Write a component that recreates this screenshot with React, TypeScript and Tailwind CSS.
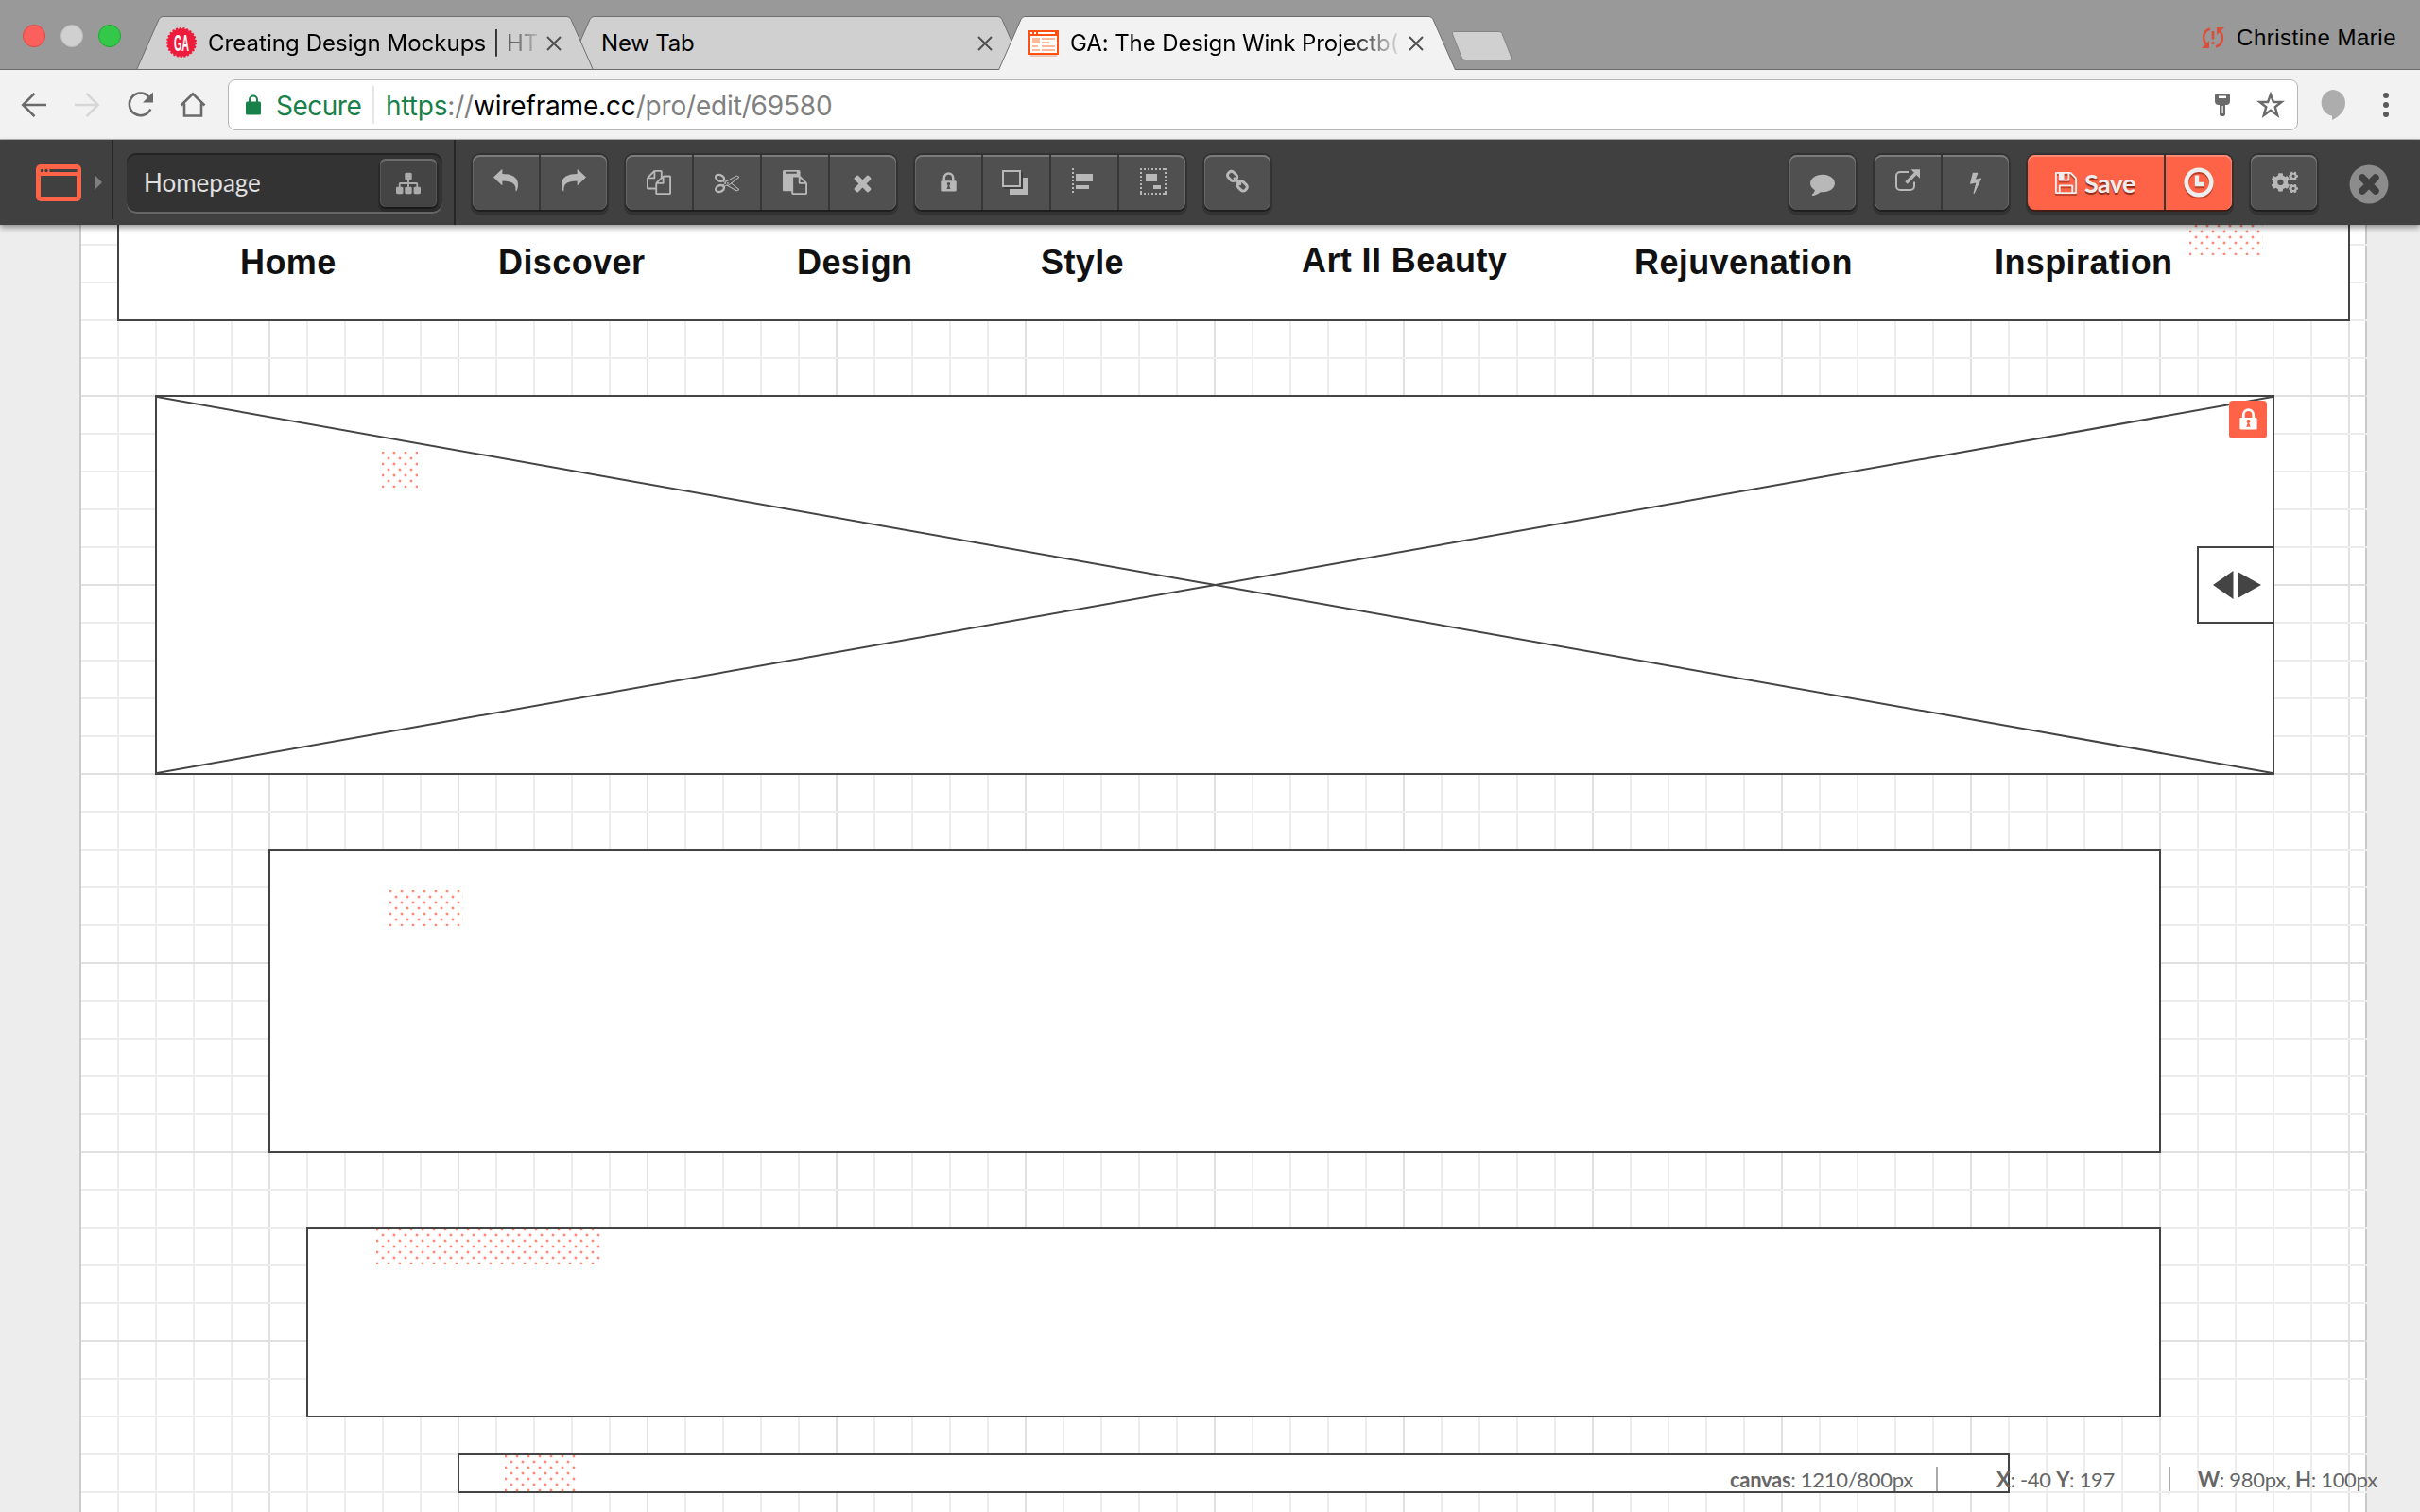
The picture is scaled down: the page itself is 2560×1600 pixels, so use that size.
import type { ReactNode } from 'react';
import { FaCogs } from 'react-icons/fa';

/* ---------- icon helpers ---------- */

const Glyph = ({ d, className = 'size-[26px]' }: { d: string; className?: string }) => (
  <svg viewBox="0 0 1792 1792" className={className} fill="currentColor">
    <path d={d} />
  </svg>
);

const SITEMAP =
  'M1792 1248v320q0 40-28 68t-68 28h-320q-40 0-68-28t-28-68v-320q0-40 28-68t68-28h96v-192h-512v192h96q40 0 68 28t28 68v320q0 40-28 68t-68 28h-320q-40 0-68-28t-28-68v-320q0-40 28-68t68-28h96v-192h-512v192h96q40 0 68 28t28 68v320q0 40-28 68t-68 28h-320q-40 0-68-28t-28-68v-320q0-40 28-68t68-28h96v-192q0-52 38-90t90-38h512v-192h-96q-40 0-68-28t-28-68v-320q0-40 28-68t68-28h320q40 0 68 28t28 68v320q0 40-28 68t-68 28h-96v192h512q52 0 90 38t38 90v192h96q40 0 68 28t28 68z';
const COPY =
  'M1696 384q40 0 68 28t28 68v1216q0 40-28 68t-68 28h-960q-40 0-68-28t-28-68v-288h-544q-40 0-68-28t-28-68v-672q0-40 20-88t48-76l408-408q28-28 76-48t88-20h416q40 0 68 28t28 68v328q68-40 128-40h416zm-544 213l-299 299h299v-299zm-640-384l-299 299h299v-299zm196 647l316-316v-416h-384v416q0 40-28 68t-68 28h-416v640h512v-256q0-40 20-88t48-76zm956 804v-1152h-384v416q0 40-28 68t-68 28h-416v640h896z';
const CUT =
  'M960 896q26 0 45 19t19 45-19 45-45 19-45-19-19-45 19-45 45-19zm300 64l507 398q28 20 25 56-5 35-35 51l-128 64q-13 7-29 7-17 0-31-8l-690-387-110 66q-8 4-12 5 14 49 10 97-7 77-56 147.5t-132 123.5q-132 84-277 84-136 0-222-78-90-84-79-207 7-76 56-147t131-124q132-84 278-84 83 0 151 31 9-13 22-22l122-73-122-73q-13-9-22-22-68 31-151 31-146 0-278-84-82-53-131-124t-56-147q-5-59 15.5-113t63.5-93q85-79 222-79 145 0 277 84 83 52 132 123t56 148q4 48-10 97 4 1 12 5l110 66 690-387q14-8 31-8 16 0 29 7l128 64q30 16 35 51 3 36-25 56zm-681-260q46-42 21-108t-106-117q-92-59-192-59-74 0-113 36-46 42-21 108t106 117q92 59 192 59 74 0 113-36zm-85 745q81-51 106-117t-21-108q-39-36-113-36-100 0-192 59-81 51-106 117t21 108q39 36 113 36 100 0 192-59zm178-613l96 58v-11q0-36 33-56l14-8-79-44-26 26q-3 3-10 11t-12 12q-2 2-4 3.5t-3 2.5zm224 224l96 32 736-576-128-64-768 431v113l-160 96 9 8q2 2 7 6 4 4 11 12t11 12l26 26zm704 416l128-64-520-408-177 138q-2 3-13 7z';
const PASTE =
  'M768 1664h896v-640h-416q-40 0-68-28t-28-68v-416h-384v1152zm256-1440v-64q0-13-9.5-22.5t-22.5-9.5h-704q-13 0-22.5 9.5t-9.5 22.5v64q0 13 9.5 22.5t22.5 9.5h704q13 0 22.5-9.5t9.5-22.5zm256 672h299l-299-299v299zm512 128v672q0 40-28 68t-68 28h-960q-40 0-68-28t-28-68v-160h-544q-40 0-68-28t-28-68v-1344q0-40 28-68t68-28h1088q40 0 68 28t28 68v328q21 13 36 28l408 408q28 28 48 76t20 88z';
const TIMES =
  'M1490 1322q0 40-28 68l-136 136q-28 28-68 28t-68-28l-294-294-294 294q-28 28-68 28t-68-28l-136-136q-28-28-28-68t28-68l294-294-294-294q-28-28-28-68t28-68l136-136q28-28 68-28t68 28l294 294 294-294q28-28 68-28t68 28l136 136q28 28 28 68t-28 68l-294 294 294 294q28 28 28 68z';
const COMMENT =
  'M1792 896q0 174-120 321.5t-326 233-450 85.5q-70 0-145-8-198 175-460 242-49 14-114 22-17 2-30.5-9t-17.5-29v-1q-3-4-.5-12t2-10 4.5-9.5l6-9 7-8.5 8-9q7-8 31-34.5t34.5-38 31-39.5 32.5-51 27-59 26-76q-157-89-247.5-220t-90.5-281q0-130 71-248.5t191-204.5 286-136.5 348-50.5q244 0 450 85.5t326 233 120 321.5z';
const BOLT =
  'M1333 566q18 20 7 44l-540 1157q-13 25-42 25-4 0-14-2-17-5-25.5-19t-4.5-30l197-808-406 101q-4 1-12 1-18 0-31-11-18-15-13-39l201-825q4-14 16-23t28-9h328q19 0 32 12.5t13 29.5q0 8-5 18l-171 463 396-98q8-2 12-2 19 0 34 15z';
const FLOPPY =
  'M512 1536h768v-384h-768v384zm896 0h128v-896q0-14-10-38.5t-20-34.5l-281-281q-10-10-34-20t-39-10v416q0 40-28 68t-68 28h-576q-40 0-68-28t-28-68v-416h-128v1280h128v-416q0-40 28-68t68-28h832q40 0 68 28t28 68v416zm-384-928v-320q0-13-9.5-22.5t-22.5-9.5h-192q-13 0-22.5 9.5t-9.5 22.5v320q0 13 9.5 22.5t22.5 9.5h192q13 0 22.5-9.5t9.5-22.5zm640 32v928q0 40-28 68t-68 28h-1344q-40 0-68-28t-28-68v-1344q0-40 28-68t68-28h928q40 0 88 20t76 48l280 280q28 28 48 76t20 88z';

const UndoIcon = ({ flip = false }: { flip?: boolean }) => (
  <svg viewBox="0 0 26 24" className={flip ? 'mb-1 h-6 w-[26px] -scale-x-100' : 'mb-1 h-6 w-[26px]'} fill="currentColor">
    <path d="M0 8.6 8.8 0.3Q9.4 0 9.4 0.8V5C19 5 26 8 26 16.5c0 2.6-.6 5-1.6 6.6-.4.6-1 .4-.9-.4C24.200 16 20 12.600 9.400 12.600V16.400Q9.400 17.400 8.600 16.700Z" />
  </svg>
);

const PadlockIcon = ({ className, hole }: { className: string; hole: string }) => (
  <svg viewBox="0 0 18 22" className={className} fill="none">
    <path d="M4 10V6.500a5 5 0 0 1 10 0V10" stroke="currentColor" strokeWidth="2.600" />
    <rect x="0.300" y="9.600" width="17.400" height="12" rx="1.200" fill="currentColor" />
    <path d="M9 11.400a1.900 1.900 0 0 1 1.100 3.400l-.3.600 1.300 3.600H6.900l1.300-3.600-.3-.6A1.900 1.900 0 0 1 9 11.400z" className={hole} />
  </svg>
);

const ArrangeIcon = () => (
  <svg viewBox="0 0 28 26" className="mr-0.5 h-[26px] w-7" shapeRendering="crispEdges">
    <path d="M22 8h6v18H8v-6h14z" fill="currentColor" />
    <path d="M20 18V2h2v18H2v-2z" fill="#3d3d3d" />
    <rect x="1" y="1" width="18" height="16" fill="none" stroke="currentColor" strokeWidth="2" />
  </svg>
);

const AlignIcon = () => (
  <svg viewBox="0 0 22 28" className="mr-1 mb-0.5 h-7 w-[22px]" shapeRendering="crispEdges" fill="currentColor">
    <path d="M1 0V28" stroke="currentColor" strokeWidth="2" strokeDasharray="2 2" />
    <path d="M4 6h18v8H4zM4 18h14v4H4z" />
  </svg>
);

const GroupIcon = () => (
  <svg viewBox="0 0 28 28" className="mb-0.5 ml-0.5 size-7" shapeRendering="crispEdges" fill="currentColor">
    <path d="M0 1H28M0 27H28M1 0V28M27 0V28" stroke="currentColor" strokeWidth="2" strokeDasharray="2 2" />
    <path d="M0 26h2v2H0zM26 26h2v2h-2zM6 6h12v8H6zM14 18h8v4h-8z" />
  </svg>
);

const ChainIcon = () => (
  <svg viewBox="0 0 26 26" className="mb-0.5 size-[26px]" fill="none" stroke="currentColor" strokeWidth="3" strokeLinecap="round">
    <rect x="-5.200" y="-3.900" width="10.400" height="7.800" rx="3.200" transform="translate(7.600 7.400) rotate(45)" />
    <rect x="-5.200" y="-3.900" width="10.400" height="7.800" rx="3.200" transform="translate(18.200 18) rotate(45)" />
    <path d="M10 9.800l5.800 5.800" />
  </svg>
);

const ShareIcon = () => (
  <svg viewBox="0 0 26 24" className="mb-1 h-6 w-[26px]" fill="none" stroke="currentColor">
    <path d="M14 3H5a4 4 0 0 0-4 4v11a4 4 0 0 0 4 4h11a4 4 0 0 0 4-4v-4.500" strokeWidth="2" />
    <path d="M11.500 14.500 22 4" strokeWidth="3.600" />
    <path d="M16.500 0.300H26V9.800Z" fill="currentColor" stroke="none" />
  </svg>
);

const HistoryIcon = () => (
  <svg viewBox="0 0 32 32" className="size-8 drop-shadow-[0_2px_0_rgba(120,30,10,0.5)]" fill="none" stroke="currentColor">
    <circle cx="16" cy="16" r="13.300" strokeWidth="4.600" />
    <path d="M14 8.500V18H22" strokeWidth="4.400" />
  </svg>
);

/* ---------- browser chrome ---------- */

const Tab = ({
  active = false,
  className,
  children,
}: {
  active?: boolean;
  className: string;
  children: ReactNode;
}) => (
  <div className={`relative h-[57px] w-[484px] shrink-0 ${className}`}>
    <svg viewBox="0 0 484 57" className="absolute inset-0 h-[57px] w-[484px]">
      <path
        d="M0.500 57 24 3.500Q25.500 0.500 28 0.500H456Q458.500 0.500 460 3.500L483.500 57"
        fill={active ? '#f2f2f2' : '#d0d0d0'}
        stroke="#6e6e6e"
        strokeWidth="1"
      />
      {!active && <path d="M0 56.500H484" stroke="#6a6a6a" />}
    </svg>
    <div className="relative flex h-full items-center pr-[34px] pl-8 text-[24px] text-black">{children}</div>
  </div>
);

const TabClose = () => (
  <svg viewBox="0 0 16 16" className="ml-auto size-4 shrink-0" stroke="#505050" strokeWidth="2">
    <path d="M1 1 15 15M15 1 1 15" />
  </svg>
);

const GaBadge = () => (
  <svg viewBox="0 0 32 32" className="mb-0.5 size-8 shrink-0 overflow-visible">
    <circle cx="16" cy="16" r="14.800" fill="#ee1c3c" />
    <circle cx="16" cy="16" r="15" fill="none" stroke="#ee1c3c" strokeWidth="2" strokeDasharray="2.200 1.570" />
    <text x="16" y="24.500" textAnchor="middle" textLength="16" lengthAdjust="spacingAndGlyphs" fontSize="24" fontWeight="700" fill="#fff" fontFamily="Liberation Sans, sans-serif">
      GA
    </text>
  </svg>
);

const WireframeFavicon = () => (
  <svg viewBox="0 0 32 28" className="h-7 w-8 shrink-0">
    <path d="M2 26h28v2H2z" fill="#eec7b9" />
    <path d="M0 0h32v26H0z" fill="#ff4f12" />
    <path d="M2 6h28v18H2z" fill="#fff" />
    <path d="M2 2h2v2H2zM6 2h2v2H6zM10 2h18v2H10z" fill="#fff" />
    <path d="M4 8h8v6H4zM14 8h14v2H14zM14 12h8v2h-8zM4 16h6v2H4zM14 16h14v2H14zM4 20h8v2H4zM14 20h14v2H14z" fill="#ffb899" />
  </svg>
);

const TabStrip = () => (
  <div className="flex h-[74px] items-end bg-[#999] shadow-[inset_0_-1px_0_#6a6a6a]">
    <div className="flex w-36 shrink-0 gap-4 self-start pt-[26px] pl-6">
      <span className="size-6 rounded-full border border-[#e2463f] bg-[#fc605c]" />
      <span className="size-6 rounded-full border border-[#bdbdbd] bg-[#d0d0d0]" />
      <span className="size-6 rounded-full border border-[#1aab29] bg-[#34c84a]" />
    </div>
    <Tab className="z-10">
      <GaBadge />
      <span className="ml-3 whitespace-nowrap tracking-[0.05px] [mask-image:linear-gradient(90deg,#000_84%,transparent_102%)]">
        Creating Design Mockups | HT
      </span>
      <TabClose />
    </Tab>
    <Tab className="-ml-7">
      <span className="ml-1 tracking-[-0.2px]">New Tab</span>
      <TabClose />
    </Tab>
    <Tab active className="z-10 -ml-7">
      <WireframeFavicon />
      <span className="ml-3 whitespace-nowrap tracking-[-0.1px] [mask-image:linear-gradient(90deg,#000_84%,transparent_102%)]">
        GA: The Design Wink Projectb(
      </span>
      <TabClose />
    </Tab>
    <svg viewBox="0 0 66 34" className="-ml-[5px] mb-2 h-[34px] w-[66px]">
      <path d="M3 1.500H51Q53 1.500 54 3.500L63.500 28Q64.500 31.500 62 31.500H15Q12.500 31.500 11.500 29.500L1.500 4Q0.500 1.500 3 1.500z" fill="#d0d0d0" stroke="#858585" />
    </svg>
    <div className="ml-auto flex items-center gap-[13px] self-start pt-[25px] pr-[25px]">
      <svg viewBox="0 0 24 22" className="h-[22px] w-6" fill="none" stroke="#d8503a" strokeWidth="2.600">
        <path d="M9 1.500C1 4 .5 13 5 18" />
        <path d="M15 20.500C23 18 23.500 9 19 4" />
        <path d="M0 22H8V14z M24 0H16V8z" fill="#d8503a" stroke="none" />
        <path d="M12 4v8.500M12 15v3" />
      </svg>
      <span className="font-['Liberation_Sans',sans-serif] text-[24px] leading-[30px] tracking-[0.5px] text-black">
        Christine Marie
      </span>
    </div>
  </div>
);

const AddressBar = () => (
  <div className="flex h-[74px] items-center border-b border-[#b4b4b4] bg-[#f2f2f2]">
    <div className="flex w-[241px] items-center pl-[22px]">
      <svg viewBox="0 0 28 28" className="size-7" fill="none" stroke="#6a6a6a" strokeWidth="2.600">
        <path d="M27 14H3M14.500 1.800 2.300 14 14.500 26.200" />
      </svg>
      <svg viewBox="0 0 28 28" className="ml-7 size-7" fill="none" stroke="#d6d6d6" strokeWidth="2.600">
        <path d="M1 14H25M13.500 1.800 25.700 14 13.500 26.200" />
      </svg>
      <svg viewBox="0 0 28 28" className="ml-7 size-7" fill="none" stroke="#6a6a6a" strokeWidth="2.600">
        <path d="M23.500 5.500A11.800 11.800 0 1 0 25.300 18.500" />
        <path d="M28 0.500V11.500H17z" fill="#6a6a6a" stroke="none" />
      </svg>
      <svg viewBox="0 0 28 28" className="ml-7 size-7" fill="none" stroke="#6a6a6a" strokeWidth="2.600">
        <path d="M1.500 14.500 14 2.200 26.500 14.500M5 12.500V25.500H23V12.500" />
      </svg>
    </div>
    <div className="flex h-[54px] w-[2190px] items-center rounded-lg border border-[#b5b5b5] bg-white pr-[13px] pl-[18px] text-[28px] whitespace-nowrap">
      <svg viewBox="0 0 16 22" className="h-[22px] w-4" fill="none">
        <path d="M4 9V5.500a4 4 0 0 1 8 0V9" stroke="#188049" strokeWidth="2" />
        <rect y="7.500" width="16" height="14" rx="1.500" fill="#188049" />
      </svg>
      <span className="ml-4 w-[90px] pt-0.5 tracking-[-0.5px] text-[#188049]">Secure</span>
      <span className="ml-3 h-10 w-0.5 bg-[#e6e6e6]" />
      <span className="ml-3 pt-0.5 tracking-[-0.17px] text-[#808080]">
        <span className="text-[#188049]">https</span>://<span className="text-black">wireframe.cc</span>/pro/edit/69580
      </span>
      <svg viewBox="0 0 16 24" className="ml-auto h-6 w-4">
        <path d="M2 0h12a2 2 0 0 1 2 2v6a4 4 0 0 1-4 4H11v10a2 2 0 0 1-2 2H7a2 2 0 0 1-2-2V12H4a4 4 0 0 1-4-4V2a2 2 0 0 1 2-2z" fill="#6a6a6a" />
        <path d="M4 2.500h8V5H4zM7.500 13h1.200v8H7.500z" fill="#fff" />
      </svg>
      <svg viewBox="0 0 30 28" className="ml-7 h-7 w-[30px]" fill="none" stroke="#6a6a6a" strokeWidth="2.400">
        <path d="M15 3 17.900 11H26.500L19.700 16.200 22.200 25 15 19.800 7.800 25 10.300 16.200 3.500 11H12.100Z" />
      </svg>
    </div>
    <svg viewBox="0 0 28 32" className="ml-[22px] h-8 w-7">
      <path d="M14 0a14 14 0 0 1 14 14C28 22 22 28 14 32V27.500A14 14 0 0 1 14 0z" fill="#adadad" />
    </svg>
    <svg viewBox="0 0 6 26" className="ml-10 h-[26px] w-1.5" fill="#5a5a5a">
      <circle cx="3" cy="3" r="3" />
      <circle cx="3" cy="13" r="3" />
      <circle cx="3" cy="23" r="3" />
    </svg>
  </div>
);

/* ---------- editor toolbar ---------- */

const ButtonGroup = ({ icons }: { icons: ReactNode[] }) => (
  <div className="flex h-[58px] shrink-0 rounded-lg bg-[#505050] text-[#b8b8b8] shadow-[inset_0_2px_0_#7c7c7c,inset_1px_0_0_#666,inset_-1px_0_0_#666,0_2px_0_#1f1f1f,0_0_0_2px_#323232,0_4px_0_2px_#333]">
    {icons.map((icon, i) => (
      <div
        key={i}
        className={
          i === 0
            ? 'flex h-[58px] w-[70px] items-center justify-center'
            : 'box-content flex h-[58px] w-[70px] items-center justify-center border-l-2 border-[#373737]'
        }
      >
        {icon}
      </div>
    ))}
  </div>
);

const EditorBar = () => (
  <div className="relative z-20 flex h-[90px] items-start bg-[#404040] shadow-[0_3px_6px_rgba(0,0,0,0.4)]">
    <div className="flex h-[84px] w-[120px] shrink-0 items-center border-r-2 border-[#262626] pt-1.5 pl-[38px]">
      <svg viewBox="0 0 48 39" className="h-[39px] w-12">
        <rect width="48" height="39" rx="5" fill="#ff6347" />
        <path d="M5 12H43V34H5zM14.500 5H43.500V8H14.500z" fill="#404040" />
        <circle cx="6.500" cy="6.500" r="1.700" fill="#404040" />
        <circle cx="11" cy="6.500" r="1.700" fill="#404040" />
      </svg>
      <svg viewBox="0 0 8 16" className="ml-3.5 h-4 w-2" fill="#808080">
        <path d="M0 0 8 8 0 16z" />
      </svg>
    </div>
    <div className="mt-3.5 ml-3.5 flex h-16 w-[334px] shrink-0 items-start justify-between rounded-[10px] bg-[#333] pt-1.5 pr-1.5 pl-[18px] shadow-[inset_0_2px_0_#232323,inset_0_-2px_0_#666]">
      <span className="font-[Lato,sans-serif] text-[26px] leading-[50px] text-[#e0e0e0]">Homepage</span>
      <span className="flex h-[51px] w-[60px] items-center justify-center rounded-md bg-[#444] text-[#aaa] shadow-[inset_0_2px_0_#6c6c6c,inset_1px_0_0_#555,inset_-1px_0_0_#555,0_2px_0_#1a1a1a,0_3px_0_2px_#292929]">
        <Glyph d={SITEMAP} />
      </span>
    </div>
    <div className="ml-3 h-[90px] w-0.5 shrink-0 bg-[#262626]" />
    <div className="mt-4 ml-[18px] flex gap-5">
      <ButtonGroup icons={[<UndoIcon />, <UndoIcon flip />]} />
      <ButtonGroup
        icons={[<Glyph d={COPY} />, <Glyph d={CUT} />, <Glyph d={PASTE} />, <Glyph d={TIMES} className="mr-px size-[27px]" />]}
      />
      <ButtonGroup
        icons={[<PadlockIcon className="mb-0.5 h-[21px] w-[17px]" hole="fill-[#505050]" />, <ArrangeIcon />, <AlignIcon />, <GroupIcon />]}
      />
      <ButtonGroup icons={[<ChainIcon />]} />
    </div>
    <div className="mt-4 ml-auto flex gap-5 pr-[33px]">
      <ButtonGroup icons={[<Glyph d={COMMENT} className="mt-0.5 size-[26px]" />]} />
      <ButtonGroup icons={[<ShareIcon />, <Glyph d={BOLT} className="size-6" />]} />
      <div className="flex h-[58px] w-[216px] rounded-lg bg-[#ff6347] text-[#eee] shadow-[inset_0_2px_0_#ff8a73,inset_-1px_0_0_#ff7b63,0_2px_0_#401c14,0_0_0_2px_#323232,0_4px_0_2px_#333]">
        <div className="flex w-[146px] items-center border-r-2 border-[#373737] pl-[27px]">
          <Glyph d={FLOPPY} className="size-[27px] drop-shadow-[0_2px_0_rgba(120,30,10,0.5)]" />
          <span className="mt-0.5 ml-1.5 font-[Lato,sans-serif] text-[27px] font-bold tracking-[-0.6px] text-shadow-[0_2px_1px_rgba(90,20,5,0.7)]">
            Save
          </span>
        </div>
        <div className="flex w-[70px] items-center justify-center">
          <HistoryIcon />
        </div>
      </div>
      <ButtonGroup icons={[<FaCogs className="ml-0.5 size-7" />]} />
      <svg viewBox="0 0 42 42" className="mt-[10px] ml-[14px] size-[42px]">
        <circle cx="21" cy="21" r="20.500" fill="#8c8c8c" />
        <path d="M14 14 28 28M28 14 14 28" stroke="#404040" strokeWidth="7.500" strokeLinecap="round" />
      </svg>
    </div>
  </div>
);

/* ---------- wireframe canvas ---------- */

const Box = ({ className, children }: { className: string; children?: ReactNode }) => (
  <div className={`absolute border-2 border-[#444] bg-white ${className}`}>{children}</div>
);

const Hatch = ({ className }: { className: string }) => (
  <div
    className={`absolute h-[38px] bg-[radial-gradient(circle_at_6px_6px,#f88a78_1.1px,#fde0da_1.6px,transparent_2.2px),radial-gradient(circle_at_6px_6px,#f88a78_1.1px,#fde0da_1.6px,transparent_2.2px)] bg-[size:12px_12px] bg-[position:-5px_-5px,1px_1px] ${className}`}
  />
);

const NAV = [
  { label: 'Home', place: 'left-[254px] top-[19px]' },
  { label: 'Discover', place: 'left-[527px] top-[19px]' },
  { label: 'Design', place: 'left-[843px] top-[19px]' },
  { label: 'Style', place: 'left-[1101px] top-[19px]' },
  { label: 'Art II Beauty', place: 'left-[1377px] top-[17px]' },
  { label: 'Rejuvenation', place: 'left-[1729px] top-[19px]' },
  { label: 'Inspiration', place: 'left-[2110px] top-[19px]' },
];

const Canvas = () => (
  <div className="relative flex-1 overflow-hidden bg-[#ededed] pl-[84px]">
    <div className="h-full w-[2420px] border-l-2 border-[#ccc] bg-white bg-[linear-gradient(#e0e0e0_2px,transparent_2px),linear-gradient(#ededed_2px,transparent_2px),linear-gradient(90deg,#e0e0e0_2px,transparent_2px),linear-gradient(90deg,#ededed_2px,transparent_2px),linear-gradient(#c8c8c8,#c8c8c8)] bg-[size:200px_200px,40px_40px,200px_200px,40px_40px,2px_100%] bg-[position:0_180px,0_20px,198px_0,38px_0,2416px_0] [background-repeat:repeat,repeat,repeat,repeat,no-repeat]" />

    <Box className="top-[-60px] left-[124px] h-[162px] w-[2362px]" />
    {NAV.map((n) => (
      <span
        key={n.label}
        className={`absolute font-['Liberation_Sans',sans-serif] text-[36px] leading-[42px] font-bold tracking-[0.4px] whitespace-nowrap text-[#111] ${n.place}`}
      >
        {n.label}
      </span>
    ))}
    <Hatch className="top-[-6px] left-[2316px] w-[78px]" />

    <Box className="top-[180px] left-[164px] h-[402px] w-[2242px]">
      <svg viewBox="0 0 2238 398" className="h-full w-full" stroke="#444" strokeWidth="2">
        <path d="M0 0 2238 398M0 398 2238 0" />
      </svg>
    </Box>
    <Hatch className="top-[240px] left-[404px] w-[38px]" />
    <div className="absolute top-[186px] left-[2358px] flex size-10 items-center justify-center rounded bg-[#ff6347] text-white">
      <PadlockIcon className="mb-0.5 h-[23px] w-[19px]" hole="fill-[#ff6347]" />
    </div>
    <Box className="top-[340px] left-[2324px] flex size-[82px] items-center justify-center">
      <svg viewBox="0 0 51 30" className="ml-0.5 h-[30px] w-[51px]" fill="#444">
        <path d="M0 15 21.500 0V30zM27 1.500 51 15 27 28.500z" />
      </svg>
    </Box>

    <Box className="top-[660px] left-[284px] h-[322px] w-[2002px]" />
    <Hatch className="top-[704px] left-[412px] w-[78px]" />

    <Box className="top-[1060px] left-[324px] h-[202px] w-[1962px]" />
    <Hatch className="top-[1062px] left-[398px] w-[237px]" />

    <Box className="top-[1300px] left-[484px] h-[42px] w-[1642px]" />
    <Hatch className="top-[1302px] left-[534px] w-[76px]" />

    <div className="absolute top-[1314px] left-[1830px] flex h-[26px] items-center font-[Lato,sans-serif] text-[22px] tracking-[-0.3px] whitespace-nowrap text-[#666]">
      <span className="w-[218px]">
        <b>canvas</b>: 1210/800px
      </span>
      <span className="h-[26px] w-0.5 bg-[#aaa]" />
      <span className="w-[244px] pl-[62px]">
        <b>X</b>: -40 <b>Y</b>: 197
      </span>
      <span className="h-[26px] w-0.5 bg-[#aaa]" />
      <span className="pl-[29px]">
        <b>W</b>: 980px, <b>H</b>: 100px
      </span>
    </div>
  </div>
);

export default function App() {
  return (
    <div className="flex h-[1600px] w-[2560px] flex-col overflow-hidden bg-[#ededed] font-[Inter,sans-serif]">
      <TabStrip />
      <AddressBar />
      <EditorBar />
      <Canvas />
    </div>
  );
}
